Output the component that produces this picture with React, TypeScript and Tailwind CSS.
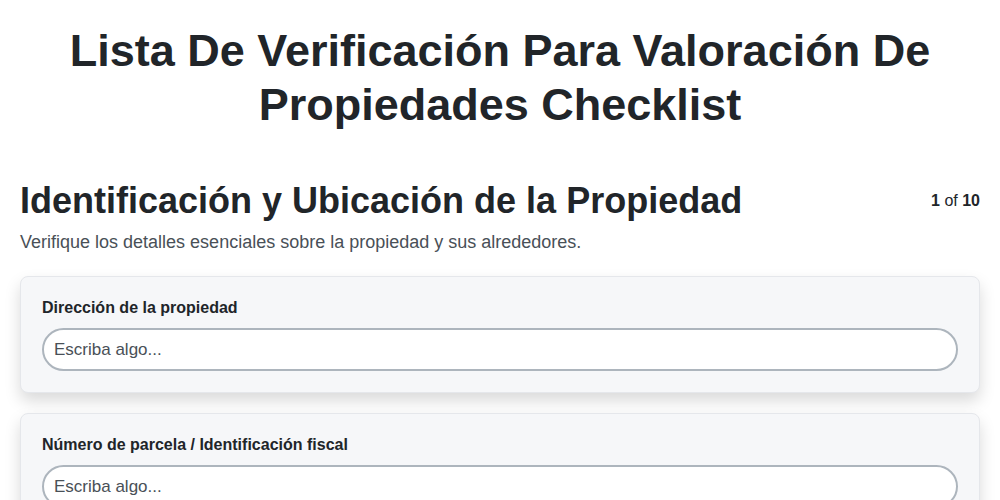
import React from "react";

function Field({ label }: { label: string }) {
  return (
    <div className="rounded-lg border border-[#e5e7eb] bg-[#f6f7f9] p-[21px] shadow-[0_8px_16px_rgba(0,0,0,0.15)]">
      <label className="block text-[16px] font-bold leading-[20px] text-[#212529]">{label}</label>
      <input
        type="text"
        placeholder="Escriba algo..."
        className="mt-[10px] block h-[43px] w-full rounded-full border-2 border-[#adb5bd] bg-white px-[10px] text-[17px] text-[#212529] outline-none placeholder:text-[#495057]"
      />
    </div>
  );
}

export default function App() {
  return (
    <div className="min-h-screen bg-white px-5 pt-[24px] font-['Liberation_Sans',Arial,sans-serif] text-[#212529]">
      <h1 className="text-center text-[45px] font-bold leading-[54px]">
        Lista De Verificación Para Valoración De
        <br />
        Propiedades Checklist
      </h1>
      <div className="mt-[47px] flex items-center justify-between">
        <h2 className="text-[36px] font-bold leading-[43px]">Identificación y Ubicación de la Propiedad</h2>
        <div className="text-[16px] leading-[22px]">
          <span className="font-bold">1</span> of <span className="font-bold">10</span>
        </div>
      </div>
      <p className="mt-[7px] text-[18px] leading-[27px] text-[#495057]">
        Verifique los detalles esenciales sobre la propiedad y sus alrededores.
      </p>
      <div className="mt-5 flex flex-col gap-[20px]">
        <Field label="Dirección de la propiedad" />
        <Field label="Número de parcela / Identificación fiscal" />
        <Field label="Tipo de propiedad" />
      </div>
    </div>
  );
}
